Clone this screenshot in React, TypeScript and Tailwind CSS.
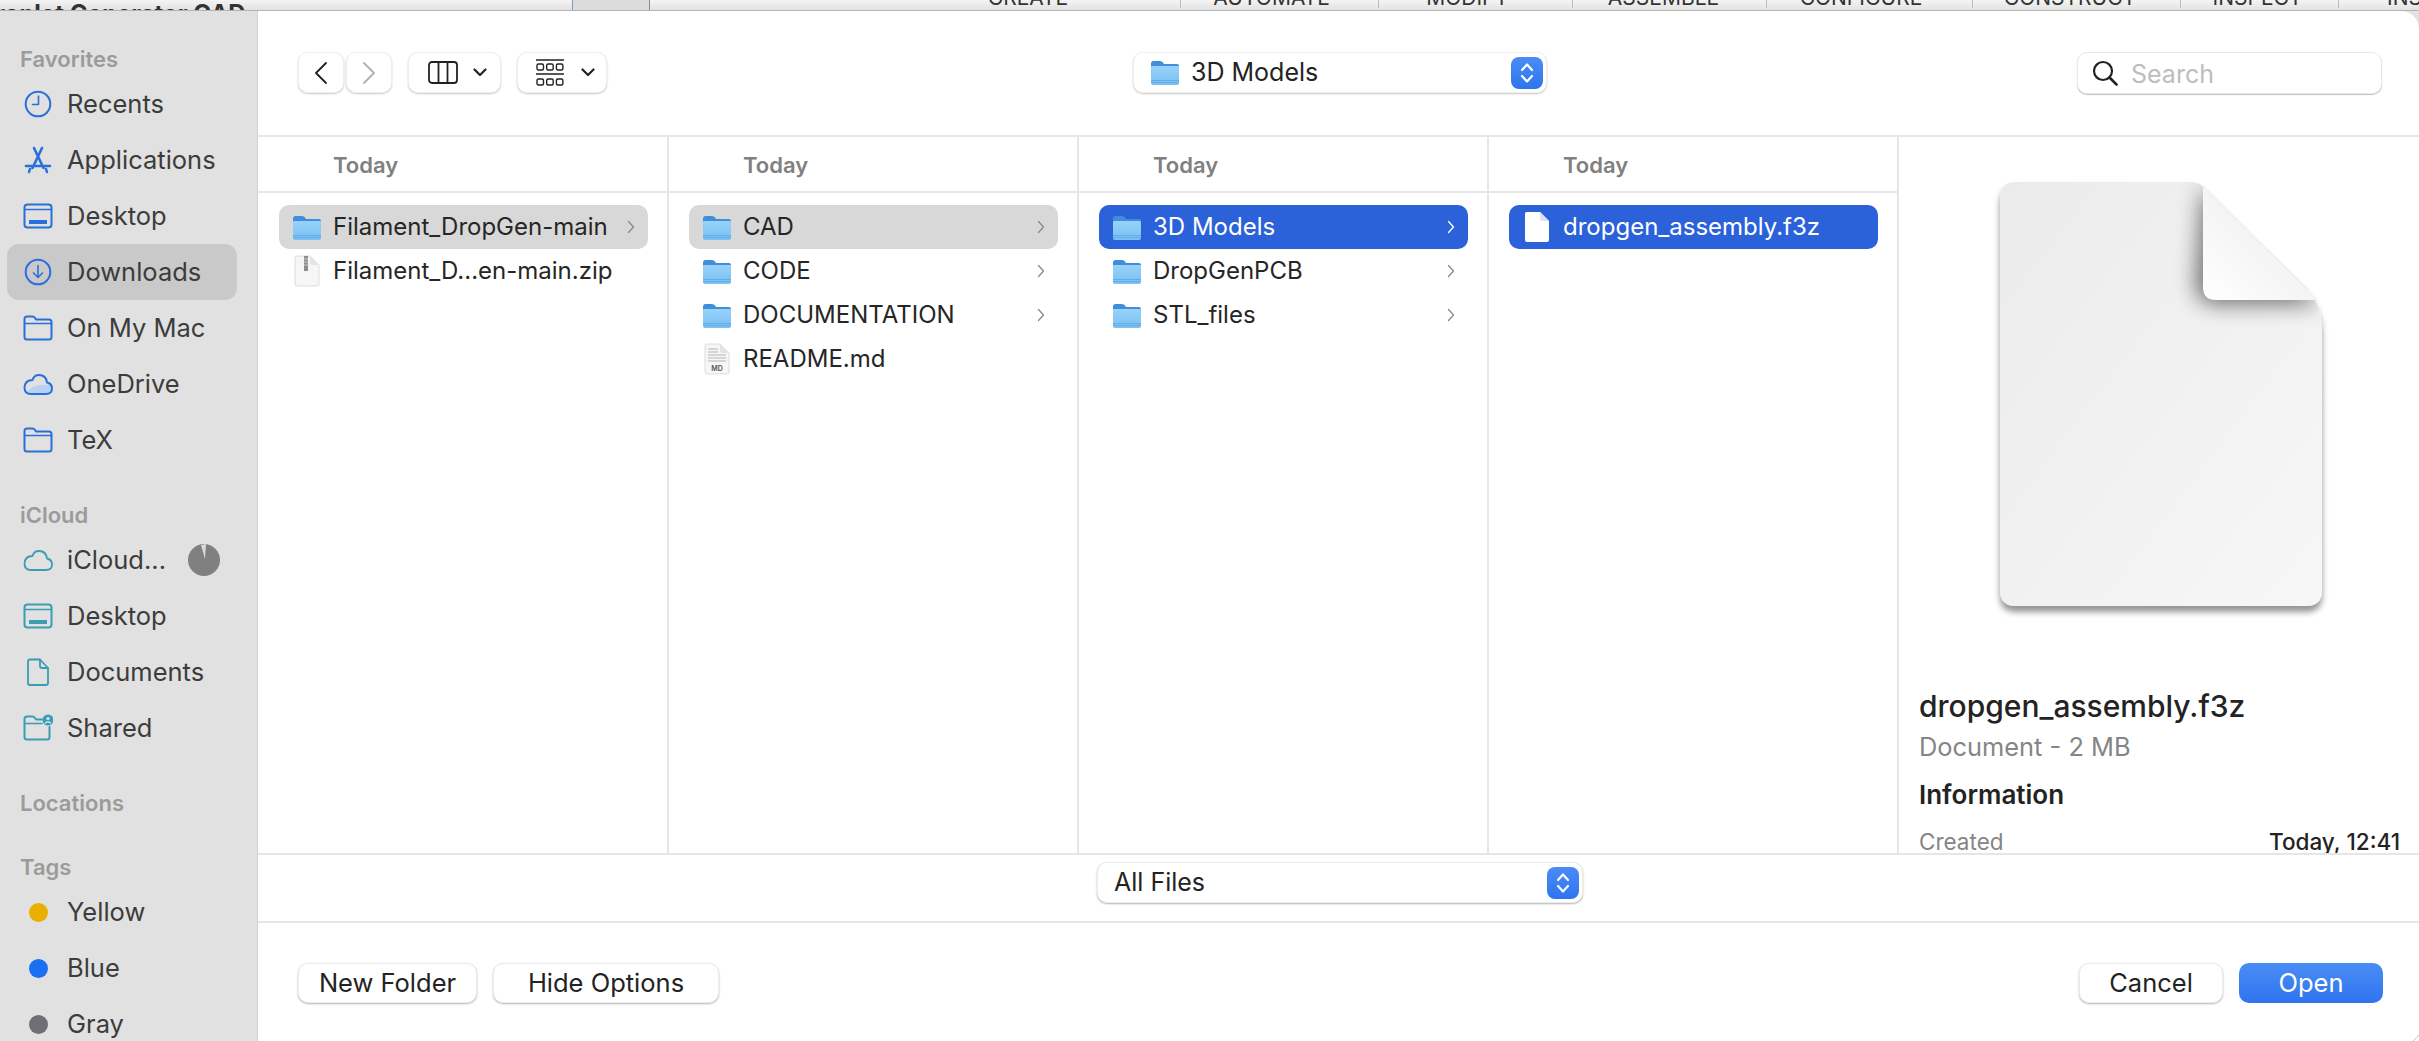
import React from 'react';

const BLUE = '#2a6fdb';
const TEAL = '#3a9db5';

const FolderIcon: React.FC<{ className?: string }> = ({ className = 'w-[30px] h-[27px]' }) => (
  <svg viewBox="0 0 30 27" className={className}>
    <defs>
      <linearGradient id="folderBody" x1="0" y1="0" x2="0" y2="1">
        <stop offset="0" stopColor="#97d2f9" />
        <stop offset="1" stopColor="#79c0f4" />
      </linearGradient>
    </defs>
    <path d="M1 5 Q1 2 3.5 2 H10 Q12 2 13 3.5 L14 5 H27 Q29 5 29 7 V12 H1Z" fill="#3f8edb" />
    <path d="M1 8 Q1 7 2 7 H28 Q29 7 29 8 V24 Q29 26 27 26 H3 Q1 26 1 24Z" fill="url(#folderBody)" />
    <path d="M1 21.5 H29 M1 23.5 H29" stroke="#5aa6e3" strokeWidth="0.8" />
  </svg>
);

const SmallChevron: React.FC<{ color?: string }> = ({ color = '#8a8a8a' }) => (
  <svg viewBox="0 0 8 14" className="w-[8px] h-[14px]">
    <path d="M1.5 1.5 L6.5 7 L1.5 12.5" fill="none" stroke={color} strokeWidth="1.3" strokeLinecap="round" strokeLinejoin="round" />
  </svg>
);

const PageIcon: React.FC<{ white?: boolean; children?: React.ReactNode }> = ({ white, children }) => (
  <svg viewBox="0 0 26 32" className="w-[26px] h-[32px]">
    <path
      d="M2.5 1 H16 L25 10 V29 Q25 31 23 31 H3 Q1 31 1 29 V2.5 Q1 1 2.5 1Z"
      fill={white ? '#ffffff' : '#f6f6f6'}
      stroke={white ? 'none' : '#d6d6d6'}
      strokeWidth="0.8"
    />
    <path d="M16 1 V8 Q16 10 18 10 H25Z" fill={white ? '#d8e2f6' : '#e4e4e4'} />
    {children}
  </svg>
);

const ZipIcon = () => (
  <PageIcon>
    <rect x="10" y="1" width="4" height="15" fill="#8d8d8d" />
    <path d="M10 4 H14 M10 7 H14 M10 10 H14" stroke="#dddddd" strokeWidth="0.8" />
  </PageIcon>
);

const MdIcon = () => (
  <div className="relative w-[26px] h-[32px]">
    <PageIcon>
      <path d="M4 6 H14 M4 9 H14 M4 12 H22 M4 15 H22 M4 18 H22" stroke="#b5b5b5" strokeWidth="1" />
    </PageIcon>
    <span className="absolute left-0 right-0 bottom-[2px] text-center text-[7px] leading-[8px] font-semibold text-[#555]">MD</span>
  </div>
);

const Stroke: React.FC<{ color: string; children: React.ReactNode; className?: string }> = ({ color, children, className = 'w-[30px] h-[30px]' }) => (
  <svg viewBox="0 0 30 30" className={className} fill="none" stroke={color} strokeWidth="2" strokeLinecap="round" strokeLinejoin="round">
    {children}
  </svg>
);

const ClockIcon = () => (
  <Stroke color={BLUE}>
    <circle cx="15" cy="15" r="12.3" />
    <path d="M15.5 7 V15.5 H9.5" strokeWidth="1.6" />
  </Stroke>
);
const AppsIcon = () => (
  <Stroke color={BLUE}>
    <path d="M11 3 L20.5 23 M19 3 L9.5 23 M3 21 H27" strokeWidth="2.6" />
    <path d="M7 24 L6 27 M23 24 L24 27" strokeWidth="2.4" />
  </Stroke>
);
const DesktopIcon: React.FC<{ color: string }> = ({ color }) => (
  <Stroke color={color}>
    <rect x="1.5" y="3.5" width="27" height="23" rx="3" />
    <path d="M1.5 8.5 H28.5" strokeWidth="1.6" />
    <rect x="6" y="19" width="18" height="4" fill={color} stroke="none" />
  </Stroke>
);
const DownloadIcon = () => (
  <Stroke color={BLUE}>
    <circle cx="15" cy="15" r="12.3" />
    <path d="M15 8.5 V20.5 M10.5 16 L15 20.5 L19.5 16" strokeWidth="1.6" />
  </Stroke>
);
const TabFolderIcon = () => (
  <Stroke color={BLUE}>
    <path d="M1.5 6 Q1.5 3.5 4 3.5 H9.5 Q11 3.5 12 5 L13 6.5 H26 Q28.5 6.5 28.5 9 V24 Q28.5 26.5 26 26.5 H4 Q1.5 26.5 1.5 24Z" />
    <path d="M1.5 10.5 H28.5" strokeWidth="1.6" />
  </Stroke>
);
const CloudPath = 'M8 25 H23 Q29 25 29 19.5 Q29 14.5 24 13.5 Q23 6 16 6 Q11 6 9.5 11 Q2 11 1.5 18.5 Q1.5 25 8 25Z';
const OneDriveIcon = () => (
  <Stroke color={BLUE}>
    <path d="M3 23 Q12 14 27.5 16 Q29 19 28 22 Q26 25 23 25 H8 Q5 25 3 23Z" fill="#b9d2f3" stroke="none" />
    <path d={CloudPath} />
  </Stroke>
);
const ICloudIcon = () => (
  <Stroke color={TEAL}>
    <path d={CloudPath} strokeWidth="1.8" />
  </Stroke>
);
const DocIcon = () => (
  <Stroke color={TEAL}>
    <path d="M5 4.5 Q5 2.5 7 2.5 H17 L25 11 V26 Q25 28 23 28 H7 Q5 28 5 26Z" strokeWidth="1.8" />
    <path d="M17 2.5 V9 Q17 11 19 11 H25" strokeWidth="1.8" />
  </Stroke>
);
const SharedIcon = () => (
  <Stroke color={TEAL}>
    <path d="M19 6.5 H13 L12 5 Q11 3.5 9.5 3.5 H4 Q1.5 3.5 1.5 6 V24 Q1.5 26.5 4 26.5 H24 Q26.5 26.5 26.5 24 V14" />
    <path d="M1.5 10.5 H19" strokeWidth="1.6" />
    <circle cx="25" cy="7" r="5.5" fill={TEAL} stroke="none" />
    <circle cx="25" cy="5.5" r="1.6" fill="#e1e1e1" stroke="none" />
    <path d="M22.5 10 Q25 7.5 27.5 10" stroke="#e1e1e1" strokeWidth="1.4" />
  </Stroke>
);

const Stepper = () => (
  <div className="w-[32px] h-[32px] rounded-[8px] bg-gradient-to-b from-[#4a8cf5] to-[#2f74ef] flex items-center justify-center">
    <svg viewBox="0 0 16 24" className="w-[16px] h-[24px]" fill="none" stroke="#ffffff" strokeWidth="2.2" strokeLinecap="round" strokeLinejoin="round">
      <path d="M3 9 L8 3.5 L13 9 M3 15 L8 20.5 L13 15" />
    </svg>
  </div>
);

const ToolChevron = () => (
  <svg viewBox="0 0 14 9" className="w-[14px] h-[9px]" fill="none" stroke="#222" strokeWidth="2.2" strokeLinecap="round" strokeLinejoin="round">
    <path d="M1.5 1.5 L7 7 L12.5 1.5" />
  </svg>
);

const toolBtn = 'h-[41px] bg-white rounded-[10px] border border-[#efefef] shadow-[0_1px_2px_rgba(0,0,0,0.22)] flex items-center';
const actionBtn = 'h-[40px] bg-white rounded-[10px] border border-[#ececec] shadow-[0_1px_2px_rgba(0,0,0,0.3)] text-[25.5px] leading-[36px] text-[#232323] text-center';

const SectionLabel: React.FC<{ text: string; className?: string }> = ({ text, className = '' }) => (
  <div className={`h-[30px] mb-[2px] pl-[20px] text-[22px] leading-[30px] font-semibold text-[#9b9b9b] ${className}`}>{text}</div>
);

const SideRow: React.FC<{ icon: React.ReactNode; label: string; active?: boolean; children?: React.ReactNode }> = ({ icon, label, active, children }) => (
  <div className={`ml-[7px] w-[230px] h-[56px] pl-[16px] flex items-center gap-[14px] rounded-[12px] ${active ? 'bg-[#c9c9c9]' : ''}`}>
    <div className="w-[30px] flex justify-center">{icon}</div>
    <span className="text-[25.5px] text-[#3c3c3c] whitespace-nowrap">{label}</span>
    {children}
  </div>
);

const TagRow: React.FC<{ dot: string; label: string }> = ({ dot, label }) => (
  <div className="h-[56px] flex items-center pl-[29px] gap-[19px]">
    <div className={`w-[19px] h-[19px] rounded-full ${dot}`}></div>
    <span className="text-[25.5px] text-[#3c3c3c]">{label}</span>
  </div>
);

type Item = { name: string; icon: React.ReactNode; chevron?: boolean; state?: 'gray' | 'blue' };

const Column: React.FC<{ items: Item[] }> = ({ items }) => (
  <div className="w-[410px] shrink-0 border-r border-[#e6e6e6] shadow-[1px_0_0_#e6e6e6] flex flex-col">
    <div className="h-[56px] pl-[75px] pt-[2px] flex items-center border-b-2 border-[#e6e6e6] text-[22px] font-semibold text-[#808080]">Today</div>
    <div className="pt-[12px] pl-[21px] pr-[19px]">
      {items.map((item) => (
        <div
          key={item.name}
          className={`h-[44px] pl-[13px] pr-[13px] flex items-center rounded-[10px] ${item.state === 'gray' ? 'bg-[#d8d8d8]' : ''} ${item.state === 'blue' ? 'bg-[#2b62d9] text-white' : 'text-[#262626]'}`}
        >
          <div className="w-[30px] flex justify-center shrink-0">{item.icon}</div>
          <span className="ml-[11px] text-[24px] whitespace-nowrap">{item.name}</span>
          {item.chevron && (
            <div className="ml-auto flex">
              <SmallChevron color={item.state === 'blue' ? '#ffffff' : '#8a8a8a'} />
            </div>
          )}
        </div>
      ))}
    </div>
  </div>
);

const PreviewDoc = () => (
  <svg viewBox="0 0 322 424" className="w-[322px] h-[424px] overflow-visible">
    <defs>
      <linearGradient id="docBody" x1="0" y1="0" x2="1" y2="1">
        <stop offset="0" stopColor="#ebebeb" />
        <stop offset="1" stopColor="#f7f7f7" />
      </linearGradient>
      <linearGradient id="docFold" x1="0" y1="1" x2="1" y2="0">
        <stop offset="0" stopColor="#ffffff" />
        <stop offset="0.55" stopColor="#f3f3f3" />
        <stop offset="1" stopColor="#dcdcdc" />
      </linearGradient>
      <filter id="docShadow" x="-10%" y="-10%" width="120%" height="120%">
        <feDropShadow dx="0" dy="6" stdDeviation="3" floodColor="#000000" floodOpacity="0.42" />
      </filter>
      <filter id="foldBlur" x="-40%" y="-40%" width="180%" height="180%">
        <feGaussianBlur stdDeviation="11" />
      </filter>
      <clipPath id="docClip">
        <path d="M16 0 H190 Q198 0 204 5 L308 108 Q322 124 322 150 V408 Q322 424 306 424 H16 Q0 424 0 408 V16 Q0 0 16 0Z" />
      </clipPath>
    </defs>
    <path
      d="M16 0 H190 Q198 0 204 5 L308 108 Q322 124 322 150 V408 Q322 424 306 424 H16 Q0 424 0 408 V16 Q0 0 16 0Z"
      fill="url(#docBody)"
      filter="url(#docShadow)"
    />
    <g clipPath="url(#docClip)">
      <path d="M203 5 L320 122 H218 Q198 122 196 104Z" fill="#000000" opacity="0.55" filter="url(#foldBlur)" />
    </g>
    <path d="M203 4 L308 108 Q314 113 318 118 H216 Q203 118 203 105Z" fill="url(#docFold)" />
  </svg>
);

const App: React.FC = () => {
  const tabs = [
    { label: 'CREATE', width: 'w-[531px]', extra: 'pl-[226px]' },
    { label: 'AUTOMATE', width: 'w-[198px]', extra: 'pr-[16px]' },
    { label: 'MODIFY', width: 'w-[194px]', extra: 'pr-[16px]' },
    { label: 'ASSEMBLE', width: 'w-[194px]', extra: 'pr-[12px]' },
    { label: 'CONFIGURE', width: 'w-[206px]', extra: 'pr-[17px]' },
    { label: 'CONSTRUCT', width: 'w-[208px]', extra: 'pr-[13px]' },
    { label: 'INSPECT', width: 'w-[158px]', extra: 'pr-[4px]' },
  ];

  return (
    <div className="w-[2419px] h-[1041px] flex flex-col overflow-hidden bg-[#e2e2e2] [font-family:Inter,'Noto_Sans',sans-serif]">
      {/* app window behind the sheet */}
      <div className="h-[11px] shrink-0 flex overflow-hidden border-b border-[#b4b4b4] bg-gradient-to-b from-[#f4f4f4] to-[#e2e2e2]">
        <div className="w-[573px] shrink-0 border-r border-[#7f9cc9]">
          <div className="mt-[2px] ml-[-22px] text-[24px] leading-[24px] font-bold text-[#333] whitespace-nowrap">Droplet Generator CAD</div>
        </div>
        <div className="w-[77px] shrink-0 bg-[#dcdcdc] border-r border-[#8a8a8a]"></div>
        {tabs.map((tab) => (
          <div key={tab.label} className={`${tab.width} shrink-0 border-r border-[#bdbdbd] h-[8px] overflow-hidden flex justify-center ${tab.extra}`}>
            <div className="mt-[-12px] text-[21px] leading-[20px] text-[#333] whitespace-nowrap">{tab.label}</div>
          </div>
        ))}
        <div className="pl-[48px] overflow-hidden">
          <div className="mt-[-12px] text-[21px] leading-[20px] text-[#333] whitespace-nowrap">INSERT</div>
        </div>
      </div>

      <div className="flex flex-1 min-h-0">
        {/* sidebar */}
        <div className="w-[258px] shrink-0 bg-[#e1e1e1] border-r border-[#d2d2d2] pt-[33px] overflow-hidden">
          <SectionLabel text="Favorites" />
          <SideRow icon={<ClockIcon />} label="Recents" />
          <SideRow icon={<AppsIcon />} label="Applications" />
          <SideRow icon={<DesktopIcon color={BLUE} />} label="Desktop" />
          <SideRow icon={<DownloadIcon />} label="Downloads" active />
          <SideRow icon={<TabFolderIcon />} label="On My Mac" />
          <SideRow icon={<OneDriveIcon />} label="OneDrive" />
          <SideRow icon={<TabFolderIcon />} label="TeX" />
          <SectionLabel text="iCloud" className="mt-[32px]" />
          <SideRow icon={<ICloudIcon />} label="iCloud...">
            <div className="ml-[8px] w-[32px] h-[32px] rounded-full bg-[#808080] flex justify-center shrink-0">
              <svg viewBox="0 0 6 16" className="w-[6px] h-[16px]">
                <path d="M0 1 L5 0 L4 15Z" fill="#d9d9d9" />
              </svg>
            </div>
          </SideRow>
          <SideRow icon={<DesktopIcon color={TEAL} />} label="Desktop" />
          <SideRow icon={<DocIcon />} label="Documents" />
          <SideRow icon={<SharedIcon />} label="Shared" />
          <SectionLabel text="Locations" className="mt-[32px]" />
          <SectionLabel text="Tags" className="mt-[34px]" />
          <TagRow dot="bg-[#e8b000]" label="Yellow" />
          <TagRow dot="bg-[#1a6ff2]" label="Blue" />
          <TagRow dot="bg-[#6e6e73]" label="Gray" />
        </div>

        {/* main */}
        <div className="relative flex-1 min-w-0 flex flex-col bg-white rounded-tr-[18px] overflow-hidden">
          <div className="h-[124px] shrink-0 flex items-start pt-[41px] pl-[40px]">
            <button className={`${toolBtn} w-[46px] justify-center`}>
              <svg viewBox="0 0 14 24" className="w-[14px] h-[24px]" fill="none" stroke="#222" strokeWidth="1.8" strokeLinecap="round" strokeLinejoin="round">
                <path d="M12 2 L2 12 L12 22" />
              </svg>
            </button>
            <button className={`${toolBtn} w-[46px] ml-[2px] justify-center`}>
              <svg viewBox="0 0 14 24" className="w-[14px] h-[24px]" fill="none" stroke="#b0b0b0" strokeWidth="1.8" strokeLinecap="round" strokeLinejoin="round">
                <path d="M2 2 L12 12 L2 22" />
              </svg>
            </button>
            <button className={`${toolBtn} w-[93px] ml-[16px] pl-[19px] gap-[15px]`}>
              <svg viewBox="0 0 30 23" className="w-[30px] h-[23px]" fill="none" stroke="#222" strokeWidth="1.8">
                <rect x="1" y="1" width="28" height="21" rx="3" />
                <path d="M10.5 1 V22 M19.5 1 V22" />
              </svg>
              <ToolChevron />
            </button>
            <button className={`${toolBtn} w-[90px] ml-[16px] pl-[18px] gap-[17px]`}>
              <svg viewBox="0 0 28 28" className="w-[28px] h-[28px]" fill="none" stroke="#222" strokeWidth="1.4">
                <path d="M0 1 H28 M0 15 H28" strokeWidth="1.6" />
                <rect x="1" y="5" width="6.5" height="6" rx="1.5" />
                <rect x="10.7" y="5" width="6.5" height="6" rx="1.5" />
                <rect x="20.4" y="5" width="6.5" height="6" rx="1.5" />
                <rect x="1" y="20" width="6.5" height="6" rx="1.5" />
                <rect x="10.7" y="20" width="6.5" height="6" rx="1.5" />
                <rect x="20.4" y="20" width="6.5" height="6" rx="1.5" />
              </svg>
              <ToolChevron />
            </button>
            <button className={`${toolBtn} w-[414px] ml-[526px] pl-[16px] pr-[3px]`}>
              <FolderIcon className="w-[30px] h-[27px]" />
              <span className="ml-[11px] text-[25px] text-[#232323]">3D Models</span>
              <div className="ml-auto">
                <Stepper />
              </div>
            </button>
            <div className="w-[305px] h-[42px] ml-[530px] bg-white rounded-[10px] border border-[#e8e8e8] shadow-[0_1px_1px_rgba(0,0,0,0.25)] flex items-center pl-[14px]">
              <svg viewBox="0 0 26 26" className="w-[26px] h-[26px]" fill="none" stroke="#222" strokeWidth="2.2" strokeLinecap="round">
                <circle cx="11" cy="11" r="9" />
                <path d="M17.5 17.5 L24.5 24.5" strokeWidth="2.6" />
              </svg>
              <input placeholder="Search" className="ml-[13px] mt-[3px] w-[230px] outline-none text-[25px] bg-transparent placeholder:text-[#bdbdbd]" />
            </div>
          </div>

          <div className="h-[718px] shrink-0 flex overflow-hidden border-t-2 border-[#e6e6e6]">
            <Column
              items={[
                { name: 'Filament_DropGen-main', icon: <FolderIcon />, chevron: true, state: 'gray' },
                { name: 'Filament_D...en-main.zip', icon: <ZipIcon /> },
              ]}
            />
            <Column
              items={[
                { name: 'CAD', icon: <FolderIcon />, chevron: true, state: 'gray' },
                { name: 'CODE', icon: <FolderIcon />, chevron: true },
                { name: 'DOCUMENTATION', icon: <FolderIcon />, chevron: true },
                { name: 'README.md', icon: <MdIcon /> },
              ]}
            />
            <Column
              items={[
                { name: '3D Models', icon: <FolderIcon />, chevron: true, state: 'blue' },
                { name: 'DropGenPCB', icon: <FolderIcon />, chevron: true },
                { name: 'STL_files', icon: <FolderIcon />, chevron: true },
              ]}
            />
            <Column items={[{ name: 'dropgen_assembly.f3z', icon: <PageIcon white />, state: 'blue' }]} />

            <div className="flex-1 min-w-0 flex flex-col pl-[21px] pr-[19px] pt-[45px]">
              <div className="flex justify-center pl-[3px]">
                <PreviewDoc />
              </div>
              <div className="mt-[82px] text-[30px] leading-[36px] font-medium text-[#232323] whitespace-nowrap">dropgen_assembly.f3z</div>
              <div className="mt-[7px] text-[25.4px] leading-[32px] text-[#858585]">Document - 2 MB</div>
              <div className="mt-[16px] text-[26px] leading-[32px] font-semibold text-[#232323]">Information</div>
              <div className="mt-[17px] flex justify-between text-[22.5px] leading-[28px]">
                <span className="text-[#858585]">Created</span>
                <span className="font-medium text-[#232323]">Today, 12:41</span>
              </div>
            </div>
          </div>

          <div className="h-[68px] shrink-0 border-t-2 border-[#e6e6e6] flex justify-center pt-[7px] pl-[3px]">
            <button className="w-[486px] h-[41px] bg-white rounded-[10px] border border-[#ececec] shadow-[0_1px_2px_rgba(0,0,0,0.3)] flex items-center pl-[16px] pr-[3px]">
              <span className="text-[25px] text-[#232323]">All Files</span>
              <div className="ml-auto">
                <Stepper />
              </div>
            </button>
          </div>

          <div className="flex-1 border-t-2 border-[#e6e6e6] flex items-start pt-[40px] pl-[40px] pr-[36px]">
            <button className={`${actionBtn} w-[179px]`}>New Folder</button>
            <button className={`${actionBtn} w-[226px] ml-[16px]`}>Hide Options</button>
            <button className={`${actionBtn} w-[144px] ml-auto`}>Cancel</button>
            <button className="w-[144px] h-[40px] ml-[16px] rounded-[10px] bg-gradient-to-b from-[#4a8cf5] to-[#2f74ef] text-[25.5px] leading-[38px] text-white text-center">Open</button>
          </div>

          {/* resize grip */}
          <svg viewBox="0 0 6 6" className="absolute right-0 bottom-0 w-[6px] h-[6px]">
            <path d="M0 6 L6 0" stroke="#c4c4c4" strokeWidth="1" />
          </svg>
        </div>
      </div>
    </div>
  );
};

export default App;
